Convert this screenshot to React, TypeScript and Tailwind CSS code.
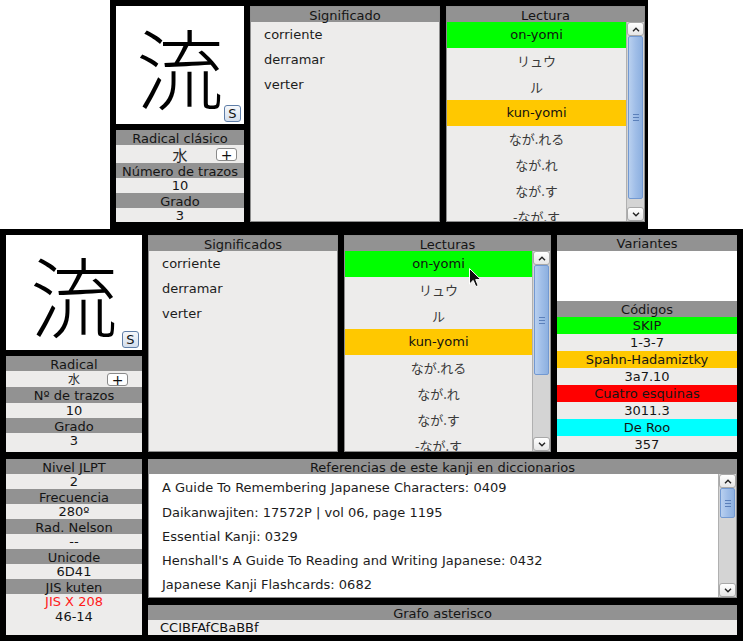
import type { ReactNode } from 'react';

type Reading = { text: string; kind?: 'on' | 'kun' };

const readings: Reading[] = [
  { text: 'on-yomi', kind: 'on' },
  { text: 'リュウ' },
  { text: 'ル' },
  { text: 'kun-yomi', kind: 'kun' },
  { text: 'なが.れる' },
  { text: 'なが.れ' },
  { text: 'なが.す' },
  { text: '-なが.す' }
];

const meanings = ['corriente', 'derramar', 'verter'];

const references = [
  'A Guide To Remembering Japanese Characters: 0409',
  'Daikanwajiten: 17572P | vol 06, page 1195',
  'Essential Kanji: 0329',
  "Henshall's A Guide To Reading and Writing Japanese: 0432",
  'Japanese Kanji Flashcards: 0682'
];

const codes = [
  { label: 'SKIP', value: '1-3-7', color: 'bg-[#00ff00]' },
  { label: 'Spahn-Hadamiztky', value: '3a7.10', color: 'bg-[#ffc800]' },
  { label: 'Cuatro esquinas', value: '3011.3', color: 'bg-[#ff0000]' },
  { label: 'De Roo', value: '357', color: 'bg-[#00ffff]' }
];

const Header = ({ children, className = 'h-[16px]' }: { children: ReactNode; className?: string }) => (
  <div className={`flex shrink-0 items-center justify-center bg-[#929292] pt-[1px] text-[13px] leading-none text-[#151515] ${className}`}>
    {children}
  </div>
);

const Cell = ({ children, className = 'h-[15px]' }: { children: ReactNode; className?: string }) => (
  <div className={`flex shrink-0 items-center justify-center text-[13px] leading-none text-[#151515] ${className}`}>
    {children}
  </div>
);

const ArrowBtn = ({ up }: { up?: boolean }) => (
  <div className="flex h-[14px] shrink-0 items-center justify-center rounded-[3px] border border-[#a8a8a8] bg-gradient-to-b from-[#ffffff] to-[#e6e6e6]">
    <svg width="8" height="5" viewBox="0 0 8 5">
      <path d={up ? 'M1 4.2 L4 1.2 L7 4.2' : 'M1 0.8 L4 3.8 L7 0.8'} fill="none" stroke="#222" strokeWidth="1.4" />
    </svg>
  </div>
);

const Scrollbar = ({ thumb, className = 'w-[18px]' }: { thumb: string; className?: string }) => (
  <div className={`flex shrink-0 flex-col border-l border-[#b0b0b0] bg-[#d4d4d4] ${className}`}>
    <ArrowBtn up />
    <div
      className={`mx-[1px] flex shrink-0 items-center justify-center rounded-[2px] border border-[#7299d2] bg-gradient-to-r from-[#b9d0ef] via-[#a0bee8] to-[#8db0e0] ${thumb}`}
    >
      <svg width="6" height="7" viewBox="0 0 6 7">
        <path d="M0 0.5 H6 M0 3.5 H6 M0 6.5 H6" stroke="#5b80ba" strokeWidth="1" />
      </svg>
    </div>
    <div className="flex-1" />
    <ArrowBtn />
  </div>
);

const KanjiBox = ({ className }: { className: string }) => (
  <div className={`relative flex shrink-0 items-center justify-center bg-white ${className}`}>
    <span className="font-['Noto_Sans_CJK_JP',serif] text-[88px] font-light leading-none text-black">流</span>
    <button className="absolute right-[3px] bottom-[2px] flex h-[17px] w-[17px] items-center justify-center rounded-[3px] border border-[#5f7ea8] bg-gradient-to-b from-[#f6f8fb] to-[#d3deed] text-[13px] leading-none text-[#111]">
      S
    </button>
  </div>
);

const RadicalRow = ({ className, btn, size }: { className: string; btn: string; size: string }) => (
  <div className={`relative flex shrink-0 items-center justify-center overflow-hidden ${className}`}>
    <span className={`font-['Noto_Sans_CJK_JP',sans-serif] leading-none text-[#2a2a2a] ${size}`}>水</span>
    <span
      className={`absolute flex h-[13px] w-[21px] items-center justify-center rounded-[3px] border border-[#8a8a8a] bg-white text-[14px] leading-none text-[#111] ${btn}`}
    >
      +
    </span>
  </div>
);

const MeaningPanel = ({ title, className }: { title: string; className: string }) => (
  <div className={`flex shrink-0 flex-col border border-[#8d8d8d] bg-[#edeceb] ${className}`}>
    <Header className="h-[15px]">{title}</Header>
    <div className="flex flex-col pl-[13px]">
      {meanings.map((m) => (
        <div key={m} className="flex h-[25px] items-center text-[13px] text-[#1c1c1c]">
          {m}
        </div>
      ))}
    </div>
  </div>
);

const ReadingPanel = ({ title, className, thumb }: { title: string; className: string; thumb: string }) => (
  <div className={`flex shrink-0 flex-col border border-[#8d8d8d] bg-[#edeceb] ${className}`}>
    <Header className="h-[15px]">{title}</Header>
    <div className="flex min-h-0 flex-1">
      <div className="flex min-w-0 flex-1 flex-col overflow-hidden">
        {readings.map((r) => (
          <div
            key={r.text}
            className={`flex h-[26px] shrink-0 items-center justify-center ${
              r.kind === 'on' ? 'bg-[#00ff00]' : r.kind === 'kun' ? 'bg-[#ffc800]' : ''
            }`}
          >
            {r.kind ? (
              <span className="text-[13px] text-[#111]">{r.text}</span>
            ) : (
              <span className="font-['Noto_Sans_CJK_JP',sans-serif] text-[13px] text-[#3a3a3a]">{r.text}</span>
            )}
          </div>
        ))}
      </div>
      <Scrollbar thumb={thumb} />
    </div>
  </div>
);

export default function App() {
  return (
    <div className="relative h-[641px] w-[743px] overflow-hidden bg-white font-['DejaVu_Sans','Noto_Sans_CJK_JP',sans-serif]">
      {/* small window */}
      <div className="ml-[110px] flex h-[229px] w-[538px] gap-[6px] bg-black pt-[6px] pr-[3px] pb-[7px] pl-[6px]">
        <div className="flex w-[128px] shrink-0 flex-col gap-[6px]">
          <KanjiBox className="h-[118px]" />
          <div className="flex flex-1 flex-col bg-[#edeceb]">
            <Header className="h-[15px]">Radical clásico</Header>
            <RadicalRow className="h-[18px]" btn="right-[7px] top-[3px]" size="text-[15px]" />
            <Header className="h-[15px]">Número de trazos</Header>
            <Cell>10</Cell>
            <Header className="h-[15px]">Grado</Header>
            <Cell className="flex-1">3</Cell>
          </div>
        </div>
        <MeaningPanel title="Significado" className="w-[190px]" />
        <ReadingPanel title="Lectura" className="w-[199px]" thumb="h-[163px]" />
      </div>

      {/* main window */}
      <div className="flex h-[412px] w-[743px] flex-col gap-[7px] bg-black p-[6px]">
        <div className="flex h-[217px] shrink-0 gap-[6px]">
          <div className="flex w-[136px] shrink-0 flex-col gap-[6px]">
            <KanjiBox className="h-[115px]" />
            <div className="flex flex-1 flex-col bg-[#edeceb]">
              <Header className="h-[15px]">Radical</Header>
              <RadicalRow className="h-[16px]" btn="right-[14px] top-[2px]" size="text-[12px]" />
              <Header className="h-[16px]">Nº de trazos</Header>
              <Cell>10</Cell>
              <Header className="h-[15px]">Grado</Header>
              <Cell>3</Cell>
            </div>
          </div>
          <MeaningPanel title="Significados" className="w-[190px]" />
          <ReadingPanel title="Lecturas" className="w-[207px]" thumb="h-[110px]" />
          <div className="flex w-[180px] shrink-0 flex-col bg-[#edeceb]">
            <Header>Variantes</Header>
            <div className="h-[50px] shrink-0 bg-white" />
            <Header>Códigos</Header>
            {codes.map((c) => (
              <div key={c.label} className="flex flex-col">
                <Cell className={`h-[17px] ${c.color}`}>{c.label}</Cell>
                <Cell className="h-[17px]">{c.value}</Cell>
              </div>
            ))}
          </div>
        </div>

        <div className="flex min-h-0 flex-1 gap-[6px]">
          <div className="flex w-[136px] shrink-0 flex-col bg-[#edeceb]">
            <Header className="h-[15px]">Nivel JLPT</Header>
            <Cell>2</Cell>
            <Header className="h-[15px]">Frecuencia</Header>
            <Cell>280º</Cell>
            <Header className="h-[15px]">Rad. Nelson</Header>
            <Cell>--</Cell>
            <Header className="h-[15px]">Unicode</Header>
            <Cell>6D41</Cell>
            <Header className="h-[15px]">JIS kuten</Header>
            <Cell>
              <span className="text-[#ff1a1a]">JIS X 208</span>
            </Cell>
            <Cell>46-14</Cell>
          </div>

          <div className="flex min-w-0 flex-1 flex-col gap-[7px]">
            <div className="flex h-[139px] shrink-0 flex-col bg-white">
              <Header className="h-[15px]">Referencias de este kanji en diccionarios</Header>
              <div className="flex min-h-0 flex-1 border border-t-0 border-[#8d8d8d]">
                <div className="flex flex-1 flex-col pt-[2px] pl-[13px]">
                  {references.map((r) => (
                    <div key={r} className="flex h-[24.5px] items-center text-[13px] text-[#1c1c1c]">
                      {r}
                    </div>
                  ))}
                </div>
                <Scrollbar thumb="h-[30px]" />
              </div>
            </div>
            <div className="flex h-[30px] shrink-0 flex-col bg-[#edeceb]">
              <Header className="h-[15px]">Grafo asterisco</Header>
              <div className="flex flex-1 items-center pl-[12px] text-[13px] leading-none text-[#111]">CCIBFAfCBaBBf</div>
            </div>
          </div>
        </div>
      </div>

      {/* mouse pointer */}
      <svg className="absolute left-[469px] top-[268px]" width="13" height="20" viewBox="0 0 13 20">
        <path d="M0.5 0.5 L0.5 16 L4.2 12.4 L6.8 18.6 L9.2 17.6 L6.7 11.6 L11.8 11.6 Z" fill="#111" stroke="#fff" strokeWidth="1" />
      </svg>
    </div>
  );
}
